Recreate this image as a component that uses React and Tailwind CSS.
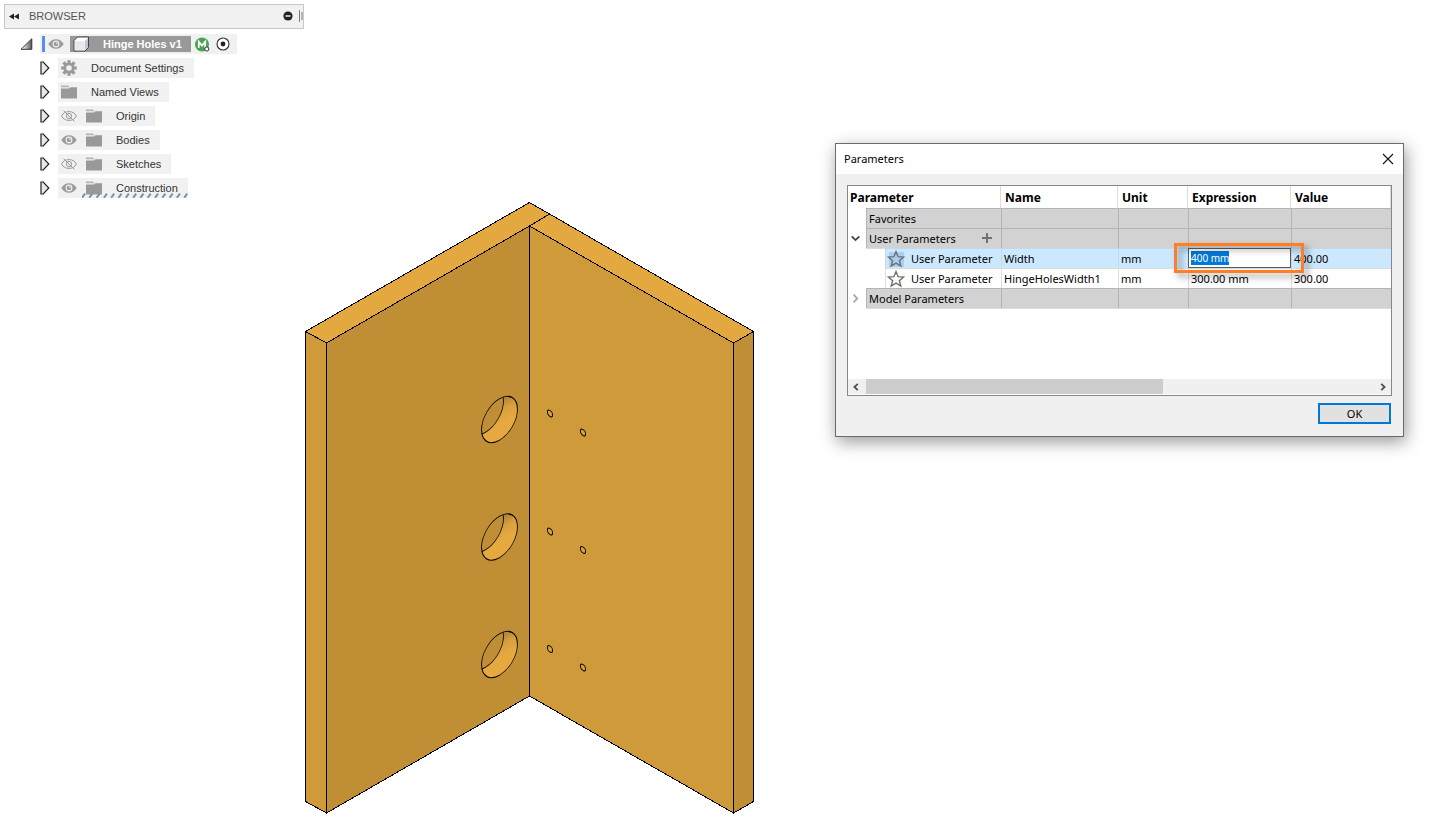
import { useEffect, useRef } from "react";

const EYE = "#9b9b9b";

function EyeIcon() {
  return (
    <svg width="16" height="12" viewBox="0 0 16 12" aria-hidden="true">
      <path d="M0.3 6C2 2.8 4.8 1.2 8 1.2S14 2.8 15.7 6C14 9.2 11.2 10.8 8 10.8S2 9.2 0.3 6Z" fill={EYE} />
      <circle cx="8" cy="6" r="3.4" fill="#f1f1f1" />
      <circle cx="8" cy="6" r="2.3" fill={EYE} />
      <circle cx="8.8" cy="5.2" r="0.8" fill="#f1f1f1" />
    </svg>
  );
}

function EyeOffIcon() {
  return (
    <svg width="16" height="12" viewBox="0 0 16 12" fill="none" stroke="#999" aria-hidden="true">
      <path d="M0.6 6C2 3 4.8 1.6 8 1.6S14 3 15.4 6C14 9 11.2 10.4 8 10.4S2 9 0.6 6Z" />
      <circle cx="8" cy="6" r="2.6" />
      <path d="M2.5 0.5L13.5 11.5" />
    </svg>
  );
}

function FolderIcon() {
  return (
    <svg width="16" height="14" viewBox="0 0 16 14" fill="#999" aria-hidden="true">
      <path d="M0 0.6H7L8.6 2.2H0Z" fill="#b5b5b5" />
      <path d="M0 3.6H7.6L9.6 2.2H16V13.6H0Z" />
    </svg>
  );
}

function GearIcon() {
  return (
    <svg width="16" height="16" viewBox="0 0 16 16" aria-hidden="true">
      <g fill="#999">
        {[0, 45, 90, 135].map((a) => (
          <rect key={a} x="6.4" y="0.2" width="3.2" height="15.6" transform={`rotate(${a} 8 8)`} />
        ))}
        <circle cx="8" cy="8" r="5.6" />
      </g>
      <circle cx="8" cy="8" r="2.8" fill="#f1f1f1" />
    </svg>
  );
}

function CubeIcon() {
  return (
    <svg width="17" height="16" viewBox="0 0 17 16" strokeLinejoin="round" aria-hidden="true">
      <path d="M1 4.5L4.5 1H15.5V11.5L12 15H1Z" fill="#fff" stroke="#444" />
      <path d="M1.8 5.2H11.8V14.3H1.8Z" fill="#e8e9ee" />
      <path d="M12 5L15 2V11.2L12 14.2Z" fill="#c4c6cf" />
    </svg>
  );
}

function Expander({ label }) {
  return (
    <button type="button" aria-label={`Expand ${label}`} className="flex w-[18px] shrink-0 items-center">
      <svg width="10" height="14" viewBox="0 0 10 14" aria-hidden="true">
        <path d="M1 1H3.2L8.8 7L3.2 13H1Z" fill="#e9e9ec" stroke="#222" strokeWidth="1.2" />
      </svg>
    </button>
  );
}

const NODES = [
  { name: "Document Settings", icon: "gear" },
  { name: "Named Views", icon: "folder" },
  { name: "Origin", icon: "folder", visible: false },
  { name: "Bodies", icon: "folder", visible: true },
  { name: "Sketches", icon: "folder", visible: false },
  { name: "Construction", icon: "folder", visible: true, marked: true },
];

function Marks() {
  return (
    <svg className="absolute bottom-0 right-0 h-[5px] w-[106px]" viewBox="0 0 106 5" stroke="#7c8fb0" strokeWidth="2" aria-hidden="true">
      {Array.from({ length: 15 }, (_, i) => (
        <path key={i} d={`M${i * 7.3} 4.8L${i * 7.3 + 3} 0.6`} />
      ))}
    </svg>
  );
}

function TreeNode({ node }) {
  const hasEye = node.visible !== undefined;
  return (
    <li className="flex h-5 pl-[40px]">
      <Expander label={node.name} />
      <div className="relative flex items-center bg-[#f1f1f1] pl-[3px] pr-[10px]">
        {hasEye && (
          <button type="button" aria-label={`Toggle ${node.name}`} className="mr-[9px]">
            {node.visible ? <EyeIcon /> : <EyeOffIcon />}
          </button>
        )}
        {node.icon === "gear" ? <GearIcon /> : <FolderIcon />}
        <span className="ml-[14px] whitespace-nowrap">{node.name}</span>
        {node.marked && <Marks />}
      </div>
    </li>
  );
}

function BrowserPanel() {
  return (
    <aside className="w-[305px] shrink-0 pt-1 font-['Liberation_Sans',Arial,sans-serif] text-[11px] leading-4 text-[#333]">
      <header className="ml-1 mr-px flex h-[25px] items-center border border-[#c8c8c8] bg-[#f1f1f1] pb-px pl-1">
        <button type="button" aria-label="Collapse browser">
          <svg width="10" height="7" viewBox="0 0 10 7" fill="#222" aria-hidden="true">
            <path d="M5 0.5V6.5L0 3.5ZM10 0.5V6.5L5 3.5Z" />
          </svg>
        </button>
        <h2 className="ml-[10px] flex-1 text-[#555]">BROWSER</h2>
        <button type="button" aria-label="Minimize">
          <svg width="10" height="10" viewBox="0 0 10 10" aria-hidden="true">
            <circle cx="5" cy="5" r="4.6" fill="#222" />
            <path d="M2.5 5H7.5" stroke="#fff" strokeWidth="1.4" />
          </svg>
        </button>
        <svg className="ml-[6px]" width="4" height="12" viewBox="0 0 4 12" aria-hidden="true">
          <path d="M0.5 0V12M3 2V10" stroke="#777" />
        </svg>
      </header>
      <ul className="mt-[5px] flex flex-col gap-1">
        <li className="flex h-5 items-center pl-5">
          <button type="button" aria-label="Collapse Hinge Holes v1" className="w-5">
            <svg width="13" height="12" viewBox="0 0 13 12" aria-hidden="true">
              <defs>
                <linearGradient id="open" x1="0" x2="1">
                  <stop offset="0.2" stopColor="#eee" />
                  <stop offset="1" stopColor="#555" />
                </linearGradient>
              </defs>
              <path d="M1 11.3H11.8V0.8Z" fill="url(#open)" stroke="#333" />
            </svg>
          </button>
          <div className="flex h-5 items-center bg-[#f1f1f1] pl-[2px] pr-[7px]">
            <span className="h-4 w-[3px] bg-[#5b8def]" />
            <button type="button" aria-label="Toggle Hinge Holes v1" className="ml-[3px]">
              <EyeIcon />
            </button>
            <div className="ml-[6px] flex h-4 items-center bg-[#999] pl-[3px] pr-[9px] font-bold text-white">
              <CubeIcon />
              <span className="ml-[13px] whitespace-nowrap">Hinge Holes v1</span>
            </div>
            <svg className="ml-1" width="15" height="15" viewBox="0 0 15 15" aria-hidden="true">
              <circle cx="7" cy="7.5" r="7" fill="#4da354" />
              <path d="M3.8 10.8V4.8L7 8.6L10.2 4.8V10.8" fill="none" stroke="#fff" strokeWidth="1.8" />
              <circle cx="11.8" cy="12" r="2.1" fill="#fff" stroke="#333" />
            </svg>
            <svg className="ml-[6px]" width="14" height="14" viewBox="0 0 14 14" aria-hidden="true">
              <circle cx="7" cy="7" r="6" fill="#fff" stroke="#333" strokeWidth="1.1" />
              <circle cx="7" cy="7" r="2.4" fill="#222" />
            </svg>
          </div>
        </li>
        {NODES.map((n) => (
          <TreeNode key={n.name} node={n} />
        ))}
      </ul>
    </aside>
  );
}

const HOLES = [419.5, 537, 654.5];
const SCREWS = [[550, 413.5], [583, 432.5], [550, 531.5], [583, 550], [550, 649], [583, 667.5]];

function Model() {
  return (
    <svg className="mt-[202px] shrink-0" width="450" height="613" viewBox="305 202 450 613" role="img" aria-label="Hinged panels" strokeLinejoin="round">
      <defs>
        <linearGradient id="wall" x1="0" y1="0" x2="0" y2="1">
          <stop offset="0" stopColor="#a87e36" />
          <stop offset="0.3" stopColor="#d79f3d" />
          <stop offset="0.6" stopColor="#e5a940" />
        </linearGradient>
        {HOLES.map((y, i) => (
          <clipPath key={y} id={`hole${i}`}>
            <circle r="20.7" transform={`matrix(.866 -.5 0 1 499.5 ${y})`} />
          </clipPath>
        ))}
      </defs>
      <g stroke="#000" shapeRendering="crispEdges">
        <path d="M305.5 331.5L529.5 202.5L549.5 214L529.5 226L326.5 343Z" fill="#e3a840" />
        <path d="M549.5 214L753.5 331.5L733.5 343L529.5 226Z" fill="#e3a840" />
        <path d="M305.5 331.5L326.5 343V813L305.5 801.5Z" fill="#ce9a3a" />
        <path d="M326.5 343L529.5 226V696L326.5 813Z" fill="#c08e34" />
        <path d="M529.5 226L733.5 343V813L529.5 696Z" fill="#ce9a3a" />
        <path d="M733.5 343L753.5 331.5V801.5L733.5 813Z" fill="#c08e34" />
      </g>
      {HOLES.map((y, i) => (
        <g key={y} stroke="#000" shapeRendering="crispEdges">
          <circle r="20.7" transform={`matrix(.866 -.5 0 1 499.5 ${y})`} fill="url(#wall)" stroke="none" />
          <g clipPath={`url(#hole${i})`}>
            <circle r="20.7" transform={`matrix(.866 -.5 0 1 485.5 ${y - 8})`} fill="#c08e34" />
          </g>
          <circle r="20.7" transform={`matrix(.866 -.5 0 1 499.5 ${y})`} fill="none" />
        </g>
      ))}
      {SCREWS.map(([x, y]) => (
        <circle key={`${x}-${y}`} r="3" transform={`matrix(.866 .5 0 1 ${x} ${y})`} fill="#d8a13c" stroke="#000" />
      ))}
    </svg>
  );
}

function Star({ selected }) {
  return (
    <svg width="18" height="18" viewBox="0 0 18 18" aria-hidden="true">
      {selected && <rect x="2" y="2" width="15" height="15" fill="#a9d0f2" />}
      <path
        d="M9 1.6L11.1 6.7L16.6 7.1L12.4 10.7L13.8 16.1L9 13.1L4.2 16.1L5.6 10.7L1.4 7.1L6.9 6.7Z"
        fill={selected ? "none" : "#fff"}
        stroke="#707070"
        strokeWidth="1.4"
      />
    </svg>
  );
}

const GROUP = "h-5 border-t border-[#b4b4b4] bg-[#d2d2d2] shadow-[0_1px_0_#dcdcdc]";

function GroupRow({ name, toggle, add }) {
  return (
    <tr>
      <td className="p-0">
        {toggle && (
          <button type="button" aria-label={`Toggle ${name}`} className="flex h-5 w-full items-center pl-[3px]">
            <svg width="9" height="9" viewBox="0 0 9 9" fill="none" strokeWidth="1.8" aria-hidden="true">
              {toggle === "open" ? <path d="M0.7 2.3L4.5 6.1L8.3 2.3" stroke="#444" /> : <path d="M2.5 0.7L6.3 4.5L2.5 8.3" stroke="#aaa" />}
            </svg>
          </button>
        )}
      </td>
      <td className="p-0">
        <div className={`${GROUP} flex items-center justify-between border-l pl-[2px] pr-2`}>
          {name}
          {add && (
            <button type="button" aria-label="Add user parameter">
              <svg width="12" height="12" viewBox="0 0 12 12" stroke="#707070" strokeWidth="2" aria-hidden="true">
                <path d="M1 5H11M6 0V10" />
              </svg>
            </button>
          )}
        </div>
      </td>
      {[0, 1, 2, 3].map((i) => (
        <td key={i} className="p-0">
          <div className={`${GROUP} border-l`} />
        </td>
      ))}
    </tr>
  );
}

function ParamRow({ name, unit, value, selected, children }) {
  const cell = selected
    ? "h-5 border-t border-l border-[#c3d9eb] bg-[#cce8ff] flex items-center pl-[2px]"
    : "h-5 border-t border-l border-[#dcdcdc] bg-white flex items-center pl-[2px]";
  const first = selected
    ? "h-5 border-t border-l border-[#c3d9eb] bg-[#cce8ff] flex items-center pl-px"
    : "h-5 border-t border-l border-[#dcdcdc] bg-white flex items-center pl-px";
  return (
    <tr>
      <td className="p-0" />
      <td className="p-0 pl-[19px]">
        <div className={first}>
          <button type="button" aria-label={`Favorite ${name}`}>
            <Star selected={selected} />
          </button>
          <span className="ml-[6px]">User Parameter</span>
        </div>
      </td>
      <td className="p-0"><div className={cell}>{name}</div></td>
      <td className="p-0"><div className={cell}>{unit}</div></td>
      <td className="relative p-0">{selected ? children : <div className={cell}>{children}</div>}</td>
      <td className="p-0"><div className={cell}>{value}</div></td>
    </tr>
  );
}

function ExpressionInput() {
  const ref = useRef(null);
  useEffect(() => {
    ref.current.focus();
    ref.current.select();
  }, []);
  return (
    <>
      <input
        ref={ref}
        aria-label="Width expression"
        defaultValue="400 mm"
        className="block h-5 w-full border border-[#5c5c5c] bg-white pl-[2px] text-[10px] outline-none selection:bg-[#0078d7] selection:text-white"
      />
      <div className="pointer-events-none absolute -inset-y-[5px] -left-[14px] -right-[13px] z-10 border-[3px] border-[#ff7f27] drop-shadow-[4px_4px_3px_rgba(0,0,0,0.4)]" />
    </>
  );
}

function ParametersDialog() {
  const head = "border-r border-[#dcdcdc] p-0 pl-1 pt-[2px] text-left font-bold";
  return (
    <section
      role="dialog"
      aria-labelledby="dialog-title"
      className="absolute right-[46px] top-[143px] w-[569px] border border-[#6b6b6b] bg-[#f0f0f0] font-['Noto_Sans','Open_Sans',sans-serif] text-[11px] leading-4 text-black shadow-[2px_5px_16px_rgba(0,0,0,0.4)]"
    >
      <header className="flex h-[30px] items-center justify-between bg-white pl-2 pr-[9px]">
        <h1 id="dialog-title">Parameters</h1>
        <button type="button" aria-label="Close">
          <svg width="12" height="12" viewBox="0 0 12 12" stroke="#111" strokeWidth="1.1" aria-hidden="true">
            <path d="M1 1L11 11M11 1L1 11" />
          </svg>
        </button>
      </header>
      <div className="p-[11px] pb-3">
        <div className="border border-[#828790] bg-white">
          <div className="min-h-[193px]">
            <table className="w-full table-fixed border-separate border-spacing-0">
              <colgroup>
                <col className="w-[18px]" />
                <col className="w-[135px]" />
                <col className="w-[117px]" />
                <col className="w-[70px]" />
                <col className="w-[103px]" />
                <col />
              </colgroup>
              <thead className="text-[12px]">
                <tr className="h-[22px]">
                  <th colSpan={2} className="border-r border-[#dcdcdc] p-0 pl-[2px] pt-[2px] text-left font-bold">Parameter</th>
                  <th className={head}>Name</th>
                  <th className={head}>Unit</th>
                  <th className={head}>Expression</th>
                  <th className={head}>Value</th>
                </tr>
              </thead>
              <tbody>
                <GroupRow name="Favorites" />
                <GroupRow name="User Parameters" toggle="open" add />
                <ParamRow name="Width" unit="mm" value="400.00" selected>
                  <ExpressionInput />
                </ParamRow>
                <ParamRow name="HingeHolesWidth1" unit="mm" value="300.00">300.00 mm</ParamRow>
                <GroupRow name="Model Parameters" toggle="closed" />
              </tbody>
            </table>
          </div>
          <div className="mb-px flex h-[15px] bg-[#f0f0f0]">
            <button type="button" aria-label="Scroll left" className="flex w-[18px] items-center pl-1">
              <svg width="8" height="8" viewBox="0 0 8 8" fill="none" stroke="#505050" strokeWidth="1.8" aria-hidden="true">
                <path d="M5.8 0.8L2.4 4L5.8 7.2" />
              </svg>
            </button>
            <div className="flex-1">
              <div className="h-full w-[297px] bg-[#cdcdcd]" />
            </div>
            <button type="button" aria-label="Scroll right" className="flex w-[17px] items-center justify-center">
              <svg width="8" height="8" viewBox="0 0 8 8" fill="none" stroke="#505050" strokeWidth="1.8" aria-hidden="true">
                <path d="M2.2 0.8L5.6 4L2.2 7.2" />
              </svg>
            </button>
          </div>
        </div>
        <div className="mt-[7px] flex justify-end pr-px">
          <button type="button" className="flex h-[21px] w-[73px] items-center justify-center border-2 border-[#0078d7] bg-[#e1e1e1]">
            OK
          </button>
        </div>
      </div>
    </section>
  );
}

export default function App() {
  return (
    <main className="relative flex min-h-screen items-start overflow-hidden bg-white">
      <BrowserPanel />
      <Model />
      <ParametersDialog />
    </main>
  );
}
